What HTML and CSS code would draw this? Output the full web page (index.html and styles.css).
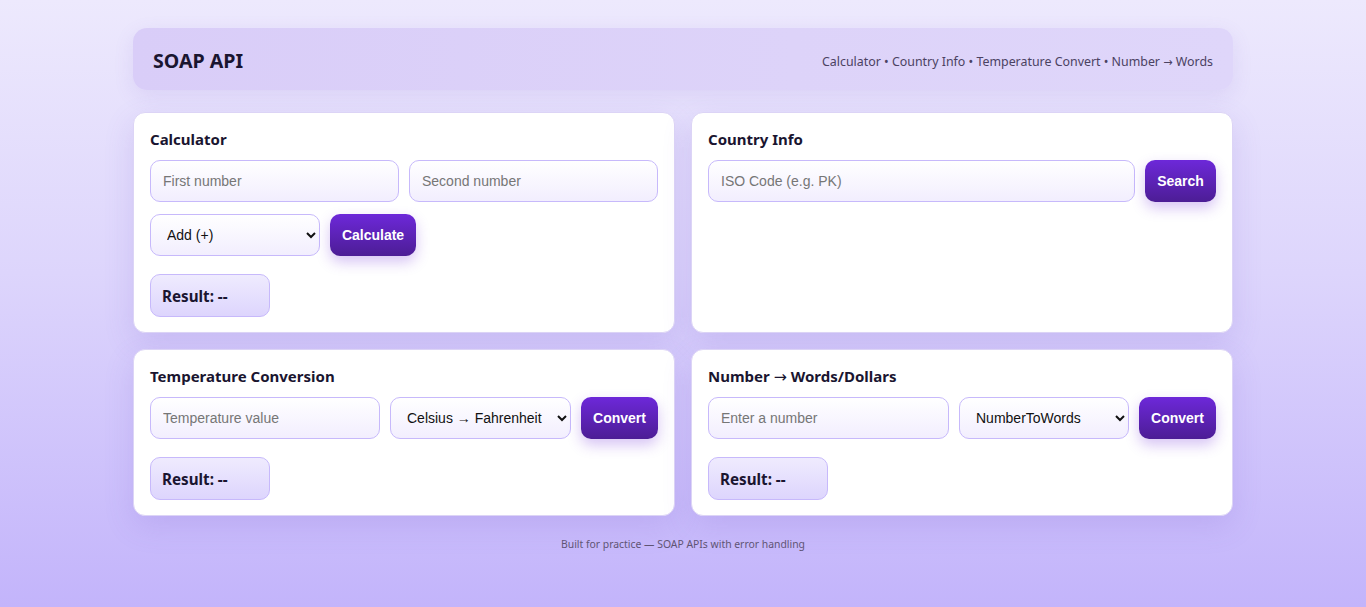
FILE: index.html
```html
<!DOCTYPE html>
<html lang="en">
<head>
<meta charset="utf-8">
<title>SOAP API</title>
<link rel="stylesheet" href="styles.css">
</head>
<body>
<div class="wrap">
  <header class="topbar">
    <h1 class="brand">SOAP API</h1>
    <nav class="nav">Calculator • Country Info • Temperature Convert • Number <span class="arr">→</span> Words</nav>
  </header>

  <main class="grid">
    <section class="card">
      <h3 class="card-title">Calculator</h3>
      <div class="row">
        <input class="field grow" type="text" placeholder="First number">
        <input class="field grow" type="text" placeholder="Second number">
      </div>
      <div class="row">
        <select class="field sel sel-calc">
          <option>Add (+)</option>
        </select>
        <button class="btn btn-calc">Calculate</button>
      </div>
      <div class="result">Result: --</div>
    </section>

    <section class="card">
      <h3 class="card-title">Country Info</h3>
      <div class="row">
        <input class="field grow" type="text" placeholder="ISO Code (e.g. PK)">
        <button class="btn btn-search">Search</button>
      </div>
    </section>

    <section class="card">
      <h3 class="card-title">Temperature Conversion</h3>
      <div class="row">
        <input class="field grow" type="text" placeholder="Temperature value">
        <select class="field sel sel-temp">
          <option>Celsius → Fahrenheit</option>
        </select>
        <button class="btn btn-conv">Convert</button>
      </div>
      <div class="result">Result: --</div>
    </section>

    <section class="card">
      <h3 class="card-title">Number <span class="arr">→</span> Words/Dollars</h3>
      <div class="row">
        <input class="field grow" type="text" placeholder="Enter a number">
        <select class="field sel sel-num">
          <option>NumberToWords</option>
        </select>
        <button class="btn btn-conv">Convert</button>
      </div>
      <div class="result">Result: --</div>
    </section>
  </main>

  <footer class="foot">Built for practice — SOAP APIs with error handling</footer>
</div>
</body>
</html>
```

FILE: styles.css
```css
* { box-sizing: border-box; }
html, body { height: 100%; }
body {
  margin: 0;
  min-height: 607px;
  background: linear-gradient(180deg, #ede9fd 0%, #ddd5fc 45%, #c3b4fb 100%);
  font-family: "Noto Sans", "Open Sans", sans-serif;
  color: #1a1530;
}
.wrap {
  width: 1100px;
  margin: 0 auto;
  padding-top: 28px;
}
.topbar {
  height: 62px;
  padding: 0 20px;
  display: flex;
  align-items: center;
  justify-content: space-between;
  border-radius: 14px;
  background: linear-gradient(90deg, #d9cdf8 0%, #ddd3f9 60%, #dfd6fa 100%);
  box-shadow: 0 6px 20px rgba(120, 90, 200, 0.12);
}
.brand {
  margin: 0;
  font-size: 19.6px;
  font-weight: 700;
  color: #1a1530;
  padding-top: 2px;
}
.nav {
  font-size: 12.4px;
  color: #4b4262;
  padding-top: 4px;
}
.arr {
  font-family: "DejaVu Sans", sans-serif;
  font-weight: 400;
  line-height: 1;
}
.nav .arr { font-size: 0.9em; }
.card-title .arr { font-size: 1.05em; }
.grid {
  margin-top: 22px;
  display: grid;
  grid-template-columns: 1fr 1fr;
  gap: 16px 16px;
}
.card {
  background: #fff;
  border: 1px solid #dcd4f6;
  border-radius: 12px;
  padding: 16px 16px 15px;
  box-shadow: 0 10px 30px rgba(110, 80, 200, 0.16);
}
.card-title {
  margin: 0 0 11px;
  height: 20px;
  font-size: 15px;
  line-height: 20px;
  font-weight: 700;
  color: #1a1530;
}
.row {
  display: flex;
  gap: 10px;
  margin-bottom: 12px;
}
.row:last-child { margin-bottom: 0; }
.field {
  height: 42px;
  border: 1px solid #c7b9fb;
  border-radius: 10px;
  background: linear-gradient(180deg, #ffffff 0%, #f2eefe 100%);
  font-family: "Liberation Sans", "DejaVu Sans", Arial, sans-serif;
  font-size: 14px;
  color: #111;
  padding: 0 12px;
  outline: none;
}
.field::placeholder { color: #767676; }
.grow { flex: 1 1 0; min-width: 0; }
.sel {
  padding: 0 8px 0 12px;
  flex: none;
}
.sel-calc { width: 170px; }
.sel-temp { width: 181px; }
.sel-num { width: 170px; }
.btn {
  flex: none;
  height: 42px;
  border: none;
  border-radius: 10px;
  background: linear-gradient(180deg, #6d28d9 0%, #4c1d95 100%);
  color: #fff;
  font-family: "Liberation Sans", Arial, sans-serif;
  font-weight: 700;
  font-size: 14px;
  box-shadow: 0 6px 14px rgba(109, 40, 217, 0.28);
  padding: 0;
}
.btn-calc { width: 86px; }
.btn-search { width: 71px; }
.btn-conv { width: 77px; }
.result {
  margin-top: 18px;
  width: 120px;
  height: 43px;
  border: 1px solid #c7b9fb;
  border-radius: 10px;
  background: linear-gradient(180deg, #efebfe 0%, #ddd5fd 100%);
  display: flex;
  align-items: center;
  padding: 1px 0 0 11px;
  font-size: 15.2px;
  font-weight: 700;
  color: #1a1530;
}
.foot {
  margin-top: 21px;
  text-align: center;
  font-size: 10.4px;
  color: #5f5474;
}
```
